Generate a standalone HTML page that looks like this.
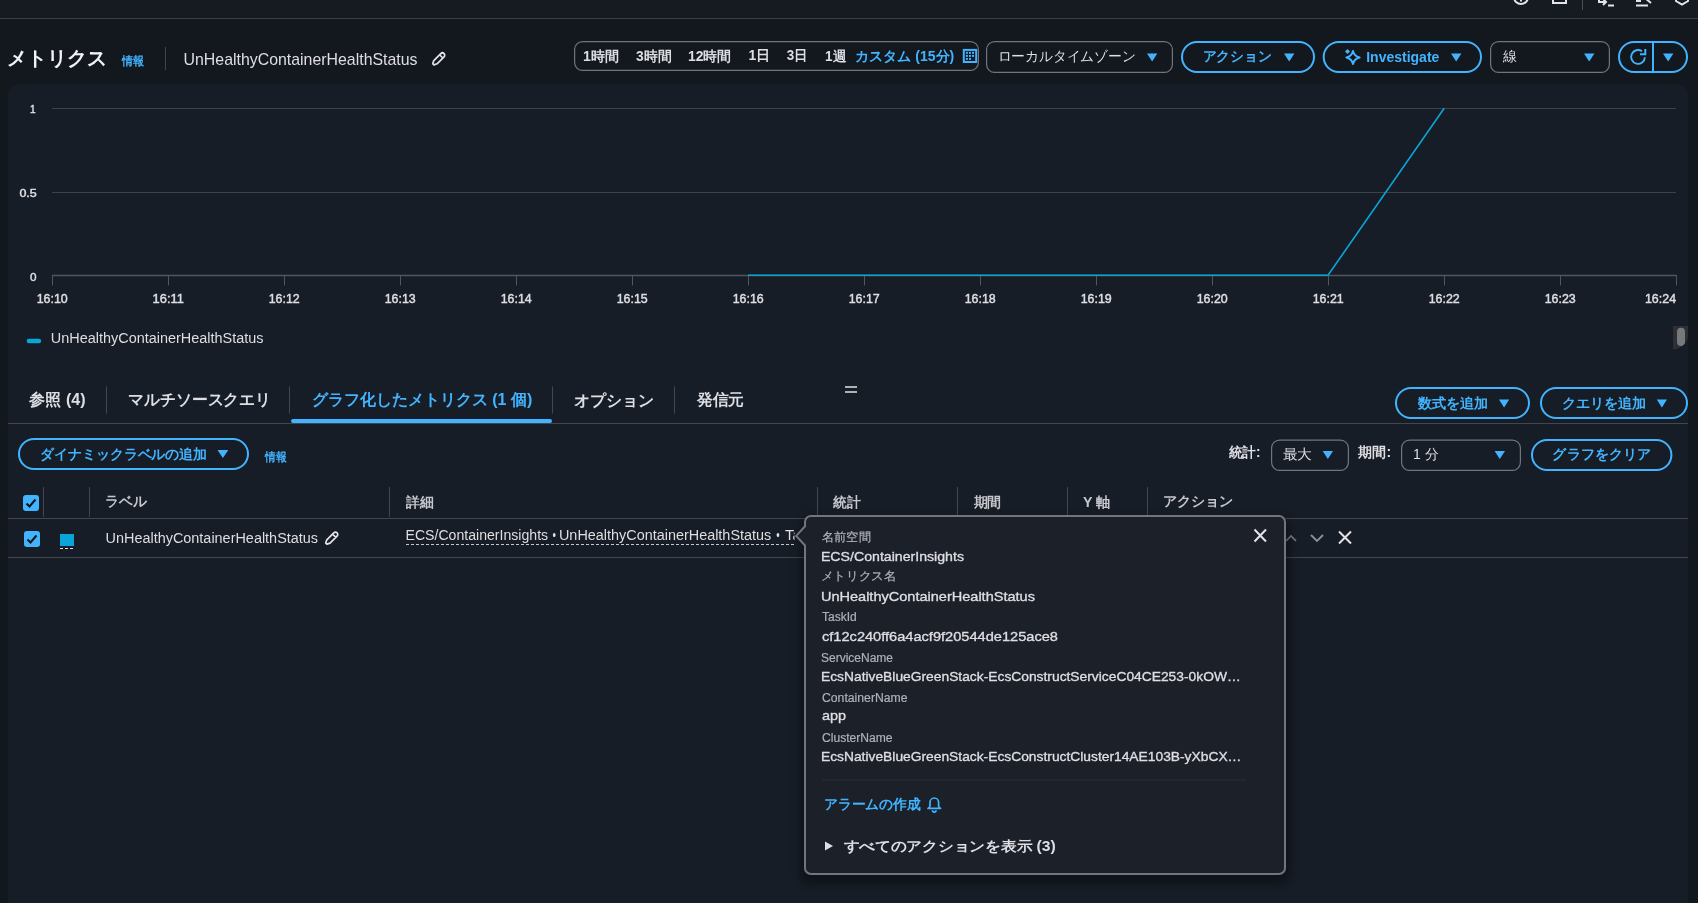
<!DOCTYPE html>
<html lang="ja">
<head>
<meta charset="utf-8">
<title>CloudWatch メトリクス</title>
<style>
html,body{margin:0;padding:0;background:#13181f;overflow:hidden;}
svg{display:block;font-family:"Liberation Sans",sans-serif;will-change:transform;}
</style>
</head>
<body>
<svg width="1698" height="903" viewBox="0 0 1698 903">
<defs><clipPath id="c1"><rect x="0" y="500" width="794.5" height="60"/></clipPath><filter id="sh" x="-10%" y="-10%" width="120%" height="120%"><feGaussianBlur stdDeviation="5"/></filter></defs>
<rect width="1698" height="903" fill="#13181f"/>
<rect width="1698" height="18" fill="#161b22"/>
<path d="M0 18.5H1698" stroke="#3a3f47" stroke-width="1"/>
<path d="M8 96A12 12 0 0 1 20 84H1676A12 12 0 0 1 1688 96V903H8Z" fill="#171d26"/>
<circle cx="1521" cy="-3" r="7" fill="none" stroke="#e3e3e8" stroke-width="2"/>
<path d="M1521 -1V1.5" stroke="#e3e3e8" stroke-width="2"/>
<path d="M1553 -6V3H1566V-6" fill="none" stroke="#e3e3e8" stroke-width="2"/>
<path d="M1582.5 0V10" stroke="#4a4f58" stroke-width="1"/>
<path d="M1599 -4V2H1606M1603 -1L1606 2L1603 5" fill="none" stroke="#e3e3e8" stroke-width="2"/>
<path d="M1608 5.5H1614" stroke="#e3e3e8" stroke-width="2"/>
<path d="M1637 -3V1H1641M1636 5.5H1648M1645 -2L1651 3" fill="none" stroke="#e3e3e8" stroke-width="2"/>
<path d="M1676 -3V1L1682 4.5L1688 1V-3" fill="none" stroke="#e3e3e8" stroke-width="2"/>
<path d="M165.5 47V70" stroke="#3f444d" stroke-width="1"/>
<g transform="translate(438.6 59) rotate(45)"><path d="M-2.3 -5.4A2.3 2.3 0 0 1 2.3 -5.4V4.5L0.8 7.5H-0.8L-2.3 4.5Z M-2.3 -3.7H2.3" fill="none" stroke="#e3e3e8" stroke-width="1.7" stroke-linejoin="round"/></g>
<rect x="574.6" y="41.6" width="403.8" height="28.8" rx="8" fill="none" stroke="#71747c" stroke-width="1.2"/>
<rect x="963.8" y="49.9" width="12.4" height="12.1" fill="none" stroke="#42b4ff" stroke-width="2"/>
<rect x="965.9" y="51.8" width="2" height="2" fill="#42b4ff"/>
<rect x="969" y="51.8" width="2" height="2" fill="#42b4ff"/>
<rect x="972" y="51.8" width="2" height="2" fill="#42b4ff"/>
<rect x="965.9" y="54.9" width="2" height="2" fill="#42b4ff"/>
<rect x="969" y="54.9" width="2" height="2" fill="#42b4ff"/>
<rect x="972" y="54.9" width="2" height="2" fill="#42b4ff"/>
<rect x="965.9" y="57.9" width="2" height="2" fill="#42b4ff"/>
<rect x="969" y="57.9" width="2" height="2" fill="#42b4ff"/>
<rect x="986.6" y="41.6" width="185.8" height="30.8" rx="8" fill="none" stroke="#71747c" stroke-width="1.2"/>
<path d="M1147 53.5H1157.3L1152.15 61.5Z" fill="#42b4ff"/>
<rect x="1182.0" y="42.0" width="132" height="30" rx="15.0" fill="none" stroke="#42b4ff" stroke-width="2"/>
<path d="M1284 53.5H1294.4L1289.2 61.5Z" fill="#42b4ff"/>
<rect x="1323.7" y="42.0" width="157.29999999999995" height="30" rx="15.0" fill="none" stroke="#42b4ff" stroke-width="2"/>
<path d="M1353 50.9Q1354.2 56.3 1359.6 57.5Q1354.2 58.7 1353 64.1Q1351.8 58.7 1346.4 57.5Q1351.8 56.3 1353 50.9Z" fill="none" stroke="#42b4ff" stroke-width="2" stroke-linejoin="round"/>
<path d="M1347.5 49L1350 51.5L1347.5 54L1345 51.5Z" fill="#42b4ff"/>
<path d="M1451 53.5H1461.4L1456.2 61.5Z" fill="#42b4ff"/>
<rect x="1490.6" y="41.6" width="118.8" height="30.8" rx="8" fill="none" stroke="#71747c" stroke-width="1.2"/>
<path d="M1584 53.5H1594.4L1589.2 61.5Z" fill="#42b4ff"/>
<rect x="1619.0" y="42.0" width="68" height="30" rx="15.0" fill="none" stroke="#42b4ff" stroke-width="2"/>
<path d="M1653 42V72" stroke="#42b4ff" stroke-width="2"/>
<path d="M1642 51.3A6.9 6.9 0 1 0 1644.9 57.3" fill="none" stroke="#42b4ff" stroke-width="1.9"/>
<path d="M1645.3 49V54.3H1640" fill="none" stroke="#42b4ff" stroke-width="2"/>
<path d="M1663 53.5H1673.4L1668.2 61.5Z" fill="#42b4ff"/>
<path d="M52 108.5H1676" stroke="#3c414a" stroke-width="1"/>
<path d="M52 192.5H1676" stroke="#3c414a" stroke-width="1"/>
<path d="M52 275.5H1676" stroke="#50555e" stroke-width="1.5"/>
<path d="M52.5 275V285.5" stroke="#50555e" stroke-width="1"/>
<path d="M168.5 275V285.5" stroke="#50555e" stroke-width="1"/>
<path d="M284.5 275V285.5" stroke="#50555e" stroke-width="1"/>
<path d="M400.5 275V285.5" stroke="#50555e" stroke-width="1"/>
<path d="M516.5 275V285.5" stroke="#50555e" stroke-width="1"/>
<path d="M632.5 275V285.5" stroke="#50555e" stroke-width="1"/>
<path d="M748.5 275V285.5" stroke="#50555e" stroke-width="1"/>
<path d="M864.5 275V285.5" stroke="#50555e" stroke-width="1"/>
<path d="M980.5 275V285.5" stroke="#50555e" stroke-width="1"/>
<path d="M1096.5 275V285.5" stroke="#50555e" stroke-width="1"/>
<path d="M1212.5 275V285.5" stroke="#50555e" stroke-width="1"/>
<path d="M1328.5 275V285.5" stroke="#50555e" stroke-width="1"/>
<path d="M1444.5 275V285.5" stroke="#50555e" stroke-width="1"/>
<path d="M1560.5 275V285.5" stroke="#50555e" stroke-width="1"/>
<path d="M1676.5 275V285.5" stroke="#50555e" stroke-width="1"/>
<path d="M748 275.3H1328L1444.2 108.2" fill="none" stroke="#0aa5d8" stroke-width="1.6"/>
<rect x="26.7" y="338.8" width="14.5" height="4.4" rx="2.2" fill="#0aa5d8"/>
<path d="M1673 326H1688V335A15 14.3 0 0 1 1673 349.3Z" fill="#2e2f32"/>
<clipPath id="hc"><path d="M1673 326H1688V335A15 14.3 0 0 1 1673 349.3Z"/></clipPath><rect x="1677" y="327.7" width="8" height="18.3" rx="4" fill="#77787b" clip-path="url(#hc)"/>
<path d="M106.5 386.5V413.5" stroke="#424650" stroke-width="1"/>
<path d="M289.5 386.5V413.5" stroke="#424650" stroke-width="1"/>
<path d="M552.5 386.5V413.5" stroke="#424650" stroke-width="1"/>
<path d="M674.5 386.5V413.5" stroke="#424650" stroke-width="1"/>
<rect x="291" y="419" width="261" height="4" rx="2" fill="#42b4ff"/>
<path d="M8 423.5H1688" stroke="#424650" stroke-width="1"/>
<rect x="845" y="386" width="12" height="2" fill="#a7b5b5"/>
<rect x="845" y="391" width="12" height="2" fill="#a7b5b5"/>
<rect x="1396.0" y="388.0" width="133" height="30" rx="15.0" fill="none" stroke="#42b4ff" stroke-width="2"/>
<path d="M1499 399.5H1509.2L1504.1 407.5Z" fill="#42b4ff"/>
<rect x="1541.0" y="388.0" width="146" height="30" rx="15.0" fill="none" stroke="#42b4ff" stroke-width="2"/>
<path d="M1656.8 399.5H1667L1661.9 407.5Z" fill="#42b4ff"/>
<rect x="19.0" y="439.0" width="229" height="30" rx="15.0" fill="none" stroke="#42b4ff" stroke-width="2"/>
<path d="M217.5 450H228.3L222.9 458Z" fill="#42b4ff"/>
<rect x="1271.6" y="440.1" width="76.8" height="30.3" rx="8" fill="none" stroke="#71747c" stroke-width="1.2"/>
<path d="M1322.7 451H1333L1327.85 459Z" fill="#42b4ff"/>
<rect x="1401.6" y="440.1" width="118.8" height="30.3" rx="8" fill="none" stroke="#71747c" stroke-width="1.2"/>
<path d="M1494.6 451H1505L1499.8 459Z" fill="#42b4ff"/>
<rect x="1532.0" y="440.0" width="139.4000000000001" height="30" rx="15.0" fill="none" stroke="#42b4ff" stroke-width="2"/>
<rect x="23" y="495" width="16" height="16" rx="3" fill="#42b4ff"/>
<path d="M26.5 503.5L29.5 506.5L35.5 499.5" fill="none" stroke="#0f141a" stroke-width="2"/>
<path d="M43.5 487V517" stroke="#424650" stroke-width="1"/>
<path d="M89.5 487V517" stroke="#424650" stroke-width="1"/>
<path d="M389.5 487V517" stroke="#424650" stroke-width="1"/>
<path d="M817.5 487V517" stroke="#424650" stroke-width="1"/>
<path d="M957.5 487V517" stroke="#424650" stroke-width="1"/>
<path d="M1067.5 487V517" stroke="#424650" stroke-width="1"/>
<path d="M1147.5 487V517" stroke="#424650" stroke-width="1"/>
<path d="M8 518.5H1688" stroke="#424650" stroke-width="1"/>
<rect x="24" y="531" width="16" height="16" rx="3" fill="#42b4ff"/>
<path d="M27.5 539.5L30.5 542.5L36.5 535.5" fill="none" stroke="#0f141a" stroke-width="2"/>
<rect x="60" y="534" width="14" height="12" fill="#0aa5d8"/>
<path d="M60 548.5H74" stroke="#dedee3" stroke-width="1" stroke-dasharray="3 2"/>
<g transform="translate(331.6 538.3) rotate(45)"><path d="M-2.3 -5.4A2.3 2.3 0 0 1 2.3 -5.4V4.5L0.8 7.5H-0.8L-2.3 4.5Z M-2.3 -3.7H2.3" fill="none" stroke="#e3e3e8" stroke-width="1.7" stroke-linejoin="round"/></g>
<path d="M406 544.5H794" stroke="#c6c6cd" stroke-width="1" stroke-dasharray="3 2"/>
<path d="M8 557.5H1688" stroke="#424650" stroke-width="1"/>
<path d="M1286 541L1291 536L1296 541" fill="none" stroke="#7a7e86" stroke-width="1.6"/>
<path d="M1311 535L1317 541L1323 535" fill="none" stroke="#8c8f96" stroke-width="1.8"/>
<path d="M1339 531.5L1351 543.5M1351 531.5L1339 543.5" fill="none" stroke="#e3e3e8" stroke-width="2"/>
<rect x="800" y="518" width="490" height="366" rx="10" fill="#000" opacity="0.35" filter="url(#sh)"/>
<path d="M811 515H1279A7 7 0 0 1 1286 522V868A7 7 0 0 1 1279 875H811A7 7 0 0 1 804 868V545.5L794.8 535.9L804 526.3V522A7 7 0 0 1 811 515Z" fill="#1b2029" stroke="none"/>
<path d="M811 516H1279A6 6 0 0 1 1285 522V868A6 6 0 0 1 1279 874H811A6 6 0 0 1 805 868V545.5L796.2 535.9L805 526.3V522A6 6 0 0 1 811 516Z" fill="none" stroke="#70757e" stroke-width="2"/>
<path d="M1254.5 529.5L1266 541.5M1266 529.5L1254.5 541.5" stroke="#e3e3e8" stroke-width="2"/>
<path d="M822 780H1246" stroke="#2a2f37" stroke-width="1"/>
<path d="M930 806V802.3A4.3 4.3 0 0 1 938.6 802.3V806Q938.6 807.3 940.6 808.4H928Q930 807.3 930 806Z M932.5 810.3A1.8 1.8 0 0 0 936.1 810.3" fill="none" stroke="#42b4ff" stroke-width="1.7" stroke-linejoin="round"/>
<path d="M825 841.6V850.5L833 846Z" fill="#dedee3"/>
<text x="7.41" y="64.5" font-size="20" font-weight="700" fill="#f3f3f7" textLength="99.58" lengthAdjust="spacingAndGlyphs">メトリクス</text>
<text x="121.92" y="65.15" font-size="12" font-weight="700" fill="#42b4ff" textLength="22.08" lengthAdjust="spacingAndGlyphs">情報</text>
<text x="183.57" y="65.3" font-size="17" font-weight="400" fill="#dedee3" textLength="233.93" lengthAdjust="spacingAndGlyphs">UnHealthyContainerHealthStatus</text>
<text x="583.09" y="60.6" font-size="14" font-weight="700" fill="#dedee3" textLength="36.01" lengthAdjust="spacingAndGlyphs">1時間</text>
<text x="636.0" y="60.6" font-size="14" font-weight="700" fill="#dedee3" textLength="35.49" lengthAdjust="spacingAndGlyphs">3時間</text>
<text x="688.0" y="60.6" font-size="14" font-weight="700" fill="#dedee3" textLength="43.37" lengthAdjust="spacingAndGlyphs">12時間</text>
<text x="748.59" y="60.1" font-size="14" font-weight="700" fill="#dedee3" textLength="21.91" lengthAdjust="spacingAndGlyphs">1日</text>
<text x="786.8" y="60.1" font-size="14" font-weight="700" fill="#dedee3" textLength="20.93" lengthAdjust="spacingAndGlyphs">3日</text>
<text x="825.03" y="60.6" font-size="14" font-weight="700" fill="#dedee3" textLength="21.07" lengthAdjust="spacingAndGlyphs">1週</text>
<text x="855.3" y="60.5" font-size="14" font-weight="700" fill="#42b4ff" textLength="99.0" lengthAdjust="spacingAndGlyphs">カスタム (15分)</text>
<text x="997.63" y="60.5" font-size="14" font-weight="400" fill="#dedee3" textLength="137.96" lengthAdjust="spacingAndGlyphs">ローカルタイムゾーン</text>
<text x="1202.71" y="60.5" font-size="14" font-weight="700" fill="#42b4ff" textLength="68.97" lengthAdjust="spacingAndGlyphs">アクション</text>
<text x="1366.2" y="61.5" font-size="14" font-weight="700" fill="#42b4ff" textLength="73.14" lengthAdjust="spacingAndGlyphs">Investigate</text>
<text x="1503.0" y="60.5" font-size="14" font-weight="400" fill="#dedee3" textLength="14.0" lengthAdjust="spacingAndGlyphs">線</text>
<text x="29.88" y="113.1" font-size="11" font-weight="400" fill="#dedee3" textLength="5.63" lengthAdjust="spacingAndGlyphs" stroke="#dedee3" stroke-width="0.45">1</text>
<text x="19.4" y="197.3" font-size="11" font-weight="400" fill="#dedee3" textLength="17.34" lengthAdjust="spacingAndGlyphs" stroke="#dedee3" stroke-width="0.45">0.5</text>
<text x="30.0" y="281.3" font-size="11" font-weight="400" fill="#dedee3" textLength="6.53" lengthAdjust="spacingAndGlyphs" stroke="#dedee3" stroke-width="0.45">0</text>
<text x="36.67" y="303.1" font-size="12" font-weight="400" fill="#dedee3" textLength="31.07" lengthAdjust="spacingAndGlyphs" stroke="#dedee3" stroke-width="0.45">16:10</text>
<text x="152.63" y="303.1" font-size="12" font-weight="400" fill="#dedee3" textLength="31.22" lengthAdjust="spacingAndGlyphs" stroke="#dedee3" stroke-width="0.45">16:11</text>
<text x="268.67" y="303.1" font-size="12" font-weight="400" fill="#dedee3" textLength="31.07" lengthAdjust="spacingAndGlyphs" stroke="#dedee3" stroke-width="0.45">16:12</text>
<text x="384.67" y="303.1" font-size="12" font-weight="400" fill="#dedee3" textLength="31.07" lengthAdjust="spacingAndGlyphs" stroke="#dedee3" stroke-width="0.45">16:13</text>
<text x="500.67" y="303.1" font-size="12" font-weight="400" fill="#dedee3" textLength="31.07" lengthAdjust="spacingAndGlyphs" stroke="#dedee3" stroke-width="0.45">16:14</text>
<text x="616.67" y="303.1" font-size="12" font-weight="400" fill="#dedee3" textLength="31.07" lengthAdjust="spacingAndGlyphs" stroke="#dedee3" stroke-width="0.45">16:15</text>
<text x="732.67" y="303.1" font-size="12" font-weight="400" fill="#dedee3" textLength="31.07" lengthAdjust="spacingAndGlyphs" stroke="#dedee3" stroke-width="0.45">16:16</text>
<text x="848.67" y="303.1" font-size="12" font-weight="400" fill="#dedee3" textLength="31.07" lengthAdjust="spacingAndGlyphs" stroke="#dedee3" stroke-width="0.45">16:17</text>
<text x="964.67" y="303.1" font-size="12" font-weight="400" fill="#dedee3" textLength="31.07" lengthAdjust="spacingAndGlyphs" stroke="#dedee3" stroke-width="0.45">16:18</text>
<text x="1080.67" y="303.1" font-size="12" font-weight="400" fill="#dedee3" textLength="31.07" lengthAdjust="spacingAndGlyphs" stroke="#dedee3" stroke-width="0.45">16:19</text>
<text x="1196.67" y="303.1" font-size="12" font-weight="400" fill="#dedee3" textLength="31.07" lengthAdjust="spacingAndGlyphs" stroke="#dedee3" stroke-width="0.45">16:20</text>
<text x="1312.67" y="303.1" font-size="12" font-weight="400" fill="#dedee3" textLength="31.07" lengthAdjust="spacingAndGlyphs" stroke="#dedee3" stroke-width="0.45">16:21</text>
<text x="1428.67" y="303.1" font-size="12" font-weight="400" fill="#dedee3" textLength="31.07" lengthAdjust="spacingAndGlyphs" stroke="#dedee3" stroke-width="0.45">16:22</text>
<text x="1544.67" y="303.1" font-size="12" font-weight="400" fill="#dedee3" textLength="31.07" lengthAdjust="spacingAndGlyphs" stroke="#dedee3" stroke-width="0.45">16:23</text>
<text x="1644.97" y="303.1" font-size="12" font-weight="400" fill="#dedee3" textLength="31.07" lengthAdjust="spacingAndGlyphs" stroke="#dedee3" stroke-width="0.45">16:24</text>
<text x="50.77" y="343" font-size="14" font-weight="400" fill="#dedee3" textLength="212.77" lengthAdjust="spacingAndGlyphs">UnHealthyContainerHealthStatus</text>
<text x="29.4" y="405.25" font-size="16" font-weight="700" fill="#dedee3" textLength="56.2" lengthAdjust="spacingAndGlyphs">参照 (4)</text>
<text x="128.31" y="405.0" font-size="16" font-weight="700" fill="#dedee3" textLength="142.65" lengthAdjust="spacingAndGlyphs">マルチソースクエリ</text>
<text x="311.7" y="405.0" font-size="16" font-weight="700" fill="#42b4ff" textLength="220.55" lengthAdjust="spacingAndGlyphs">グラフ化したメトリクス (1 個)</text>
<text x="574.4" y="405.95" font-size="16" font-weight="700" fill="#dedee3" textLength="79.79" lengthAdjust="spacingAndGlyphs">オプション</text>
<text x="696.9" y="404.75" font-size="16" font-weight="700" fill="#dedee3" textLength="47.1" lengthAdjust="spacingAndGlyphs">発信元</text>
<text x="1417.5" y="407.5" font-size="14" font-weight="700" fill="#42b4ff" textLength="70.51" lengthAdjust="spacingAndGlyphs">数式を追加</text>
<text x="1561.59" y="407.5" font-size="14" font-weight="700" fill="#42b4ff" textLength="84.92" lengthAdjust="spacingAndGlyphs">クエリを追加</text>
<text x="39.7" y="458.5" font-size="14" font-weight="700" fill="#42b4ff" textLength="167.7" lengthAdjust="spacingAndGlyphs">ダイナミックラベルの追加</text>
<text x="265.0" y="461.35" font-size="12" font-weight="700" fill="#42b4ff" textLength="21.7" lengthAdjust="spacingAndGlyphs">情報</text>
<text x="1228.8" y="457.0" font-size="14" font-weight="700" fill="#dedee3" textLength="31.75" lengthAdjust="spacingAndGlyphs">統計:</text>
<text x="1282.65" y="459.0" font-size="14" font-weight="400" fill="#dedee3" textLength="29.4" lengthAdjust="spacingAndGlyphs">最大</text>
<text x="1358.4" y="457.0" font-size="14" font-weight="700" fill="#dedee3" textLength="32.67" lengthAdjust="spacingAndGlyphs">期間:</text>
<text x="1413.0" y="459.0" font-size="14" font-weight="400" fill="#dedee3" textLength="25.69" lengthAdjust="spacingAndGlyphs">1 分</text>
<text x="1552.49" y="458.5" font-size="14" font-weight="700" fill="#42b4ff" textLength="98.51" lengthAdjust="spacingAndGlyphs">グラフをクリア</text>
<text x="105.01" y="505.85" font-size="14" font-weight="700" fill="#c6c6cd" textLength="41.59" lengthAdjust="spacingAndGlyphs">ラベル</text>
<text x="405.7" y="506.75" font-size="14" font-weight="700" fill="#c6c6cd" textLength="27.79" lengthAdjust="spacingAndGlyphs">詳細</text>
<text x="833.2" y="506.9" font-size="14" font-weight="700" fill="#c6c6cd" textLength="27.7" lengthAdjust="spacingAndGlyphs">統計</text>
<text x="973.5" y="506.9" font-size="14" font-weight="700" fill="#c6c6cd" textLength="27.9" lengthAdjust="spacingAndGlyphs">期間</text>
<text x="1083.0" y="506.9" font-size="14" font-weight="700" fill="#c6c6cd" textLength="27.4" lengthAdjust="spacingAndGlyphs">Y 軸</text>
<text x="1162.99" y="506.4" font-size="14" font-weight="700" fill="#c6c6cd" textLength="70.51" lengthAdjust="spacingAndGlyphs">アクション</text>
<text x="105.57" y="542.9" font-size="14" font-weight="400" fill="#dedee3" textLength="212.47" lengthAdjust="spacingAndGlyphs">UnHealthyContainerHealthStatus</text>
<text x="405.49" y="540" font-size="14" font-weight="400" fill="#dedee3" textLength="142.65" lengthAdjust="spacingAndGlyphs">ECS/ContainerInsights</text>
<text x="552.5" y="540" font-size="14" font-weight="400" fill="#dedee3" textLength="3.43" lengthAdjust="spacingAndGlyphs">•</text>
<text x="558.97" y="540" font-size="14" font-weight="400" fill="#dedee3" textLength="212.27" lengthAdjust="spacingAndGlyphs">UnHealthyContainerHealthStatus</text>
<text x="776.3" y="540" font-size="14" font-weight="400" fill="#dedee3" textLength="3.43" lengthAdjust="spacingAndGlyphs">•</text>
<text x="785.0" y="540" font-size="14" font-weight="400" fill="#dedee3" textLength="15.78" lengthAdjust="spacingAndGlyphs" clip-path="url(#c1)">Ta</text>
<text x="822.0" y="540.5" font-size="12" font-weight="400" fill="#b0b0b8" textLength="48.82" lengthAdjust="spacingAndGlyphs" stroke="#b0b0b8" stroke-width="0.2">名前空間</text>
<text x="820.95" y="560.9" font-size="13.5" font-weight="400" fill="#dedee3" textLength="143.05" lengthAdjust="spacingAndGlyphs" stroke="#dedee3" stroke-width="0.35">ECS/ContainerInsights</text>
<text x="820.96" y="580.2" font-size="12" font-weight="400" fill="#b0b0b8" textLength="75.13" lengthAdjust="spacingAndGlyphs" stroke="#b0b0b8" stroke-width="0.2">メトリクス名</text>
<text x="820.92" y="601.3" font-size="13.5" font-weight="400" fill="#dedee3" textLength="214.02" lengthAdjust="spacingAndGlyphs" stroke="#dedee3" stroke-width="0.35">UnHealthyContainerHealthStatus</text>
<text x="822.0" y="621.3" font-size="12" font-weight="400" fill="#b0b0b8" textLength="34.69" lengthAdjust="spacingAndGlyphs" stroke="#b0b0b8" stroke-width="0.2">TaskId</text>
<text x="822.0" y="641" font-size="13.5" font-weight="400" fill="#dedee3" textLength="235.92" lengthAdjust="spacingAndGlyphs" stroke="#dedee3" stroke-width="0.35">cf12c240ff6a4acf9f20544de125ace8</text>
<text x="821.0" y="662" font-size="12" font-weight="400" fill="#b0b0b8" textLength="72.03" lengthAdjust="spacingAndGlyphs" stroke="#b0b0b8" stroke-width="0.2">ServiceName</text>
<text x="820.98" y="680.8" font-size="13.5" font-weight="400" fill="#dedee3" textLength="419.76" lengthAdjust="spacingAndGlyphs" stroke="#dedee3" stroke-width="0.35">EcsNativeBlueGreenStack-EcsConstructServiceC04CE253-0kOW…</text>
<text x="822.0" y="701.8" font-size="12" font-weight="400" fill="#b0b0b8" textLength="85.55" lengthAdjust="spacingAndGlyphs" stroke="#b0b0b8" stroke-width="0.2">ContainerName</text>
<text x="822.0" y="719.5" font-size="13.5" font-weight="400" fill="#dedee3" textLength="24.07" lengthAdjust="spacingAndGlyphs" stroke="#dedee3" stroke-width="0.35">app</text>
<text x="822.0" y="741.5" font-size="12" font-weight="400" fill="#b0b0b8" textLength="70.53" lengthAdjust="spacingAndGlyphs" stroke="#b0b0b8" stroke-width="0.2">ClusterName</text>
<text x="820.98" y="761" font-size="13.5" font-weight="400" fill="#dedee3" textLength="420.42" lengthAdjust="spacingAndGlyphs" stroke="#dedee3" stroke-width="0.35">EcsNativeBlueGreenStack-EcsConstructCluster14AE103B-yXbCX…</text>
<text x="824.01" y="809.1" font-size="14" font-weight="700" fill="#42b4ff" textLength="96.69" lengthAdjust="spacingAndGlyphs">アラームの作成</text>
<text x="843.6" y="850.55" font-size="14" font-weight="700" fill="#dedee3" textLength="212.22" lengthAdjust="spacingAndGlyphs">すべてのアクションを表示 (3)</text>
</svg>
</body>
</html>
